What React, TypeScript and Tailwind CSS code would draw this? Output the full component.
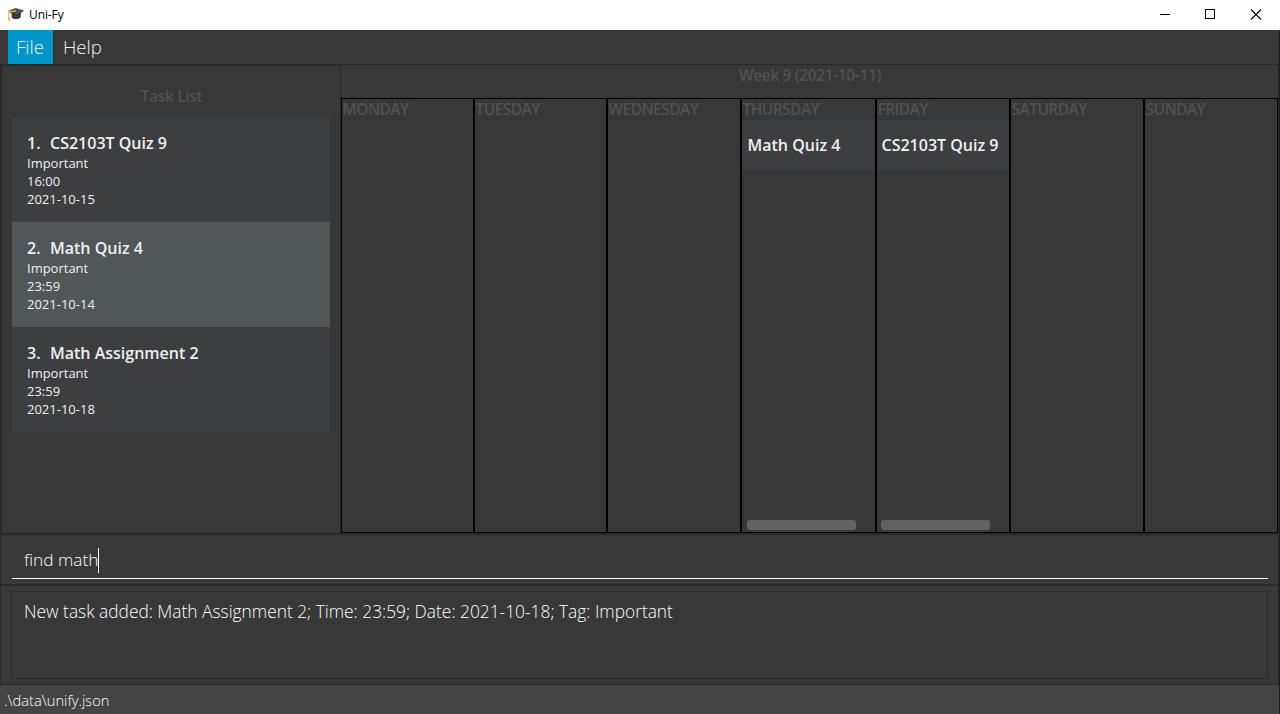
import React from "react";

type Task = { id: number; name: string; tag: string; time: string; date: string; shade: string };
type Day = { name: string; width: string; task?: string; taskPad?: string; barMargin?: string };

const tasks: Task[] = [
  { id: 1, name: "CS2103T Quiz 9", tag: "Important", time: "16:00", date: "2021-10-15", shade: "bg-[#3c3e3f]" },
  { id: 2, name: "Math Quiz 4", tag: "Important", time: "23:59", date: "2021-10-14", shade: "bg-[#515658]" },
  { id: 3, name: "Math Assignment 2", tag: "Important", time: "23:59", date: "2021-10-18", shade: "bg-[#3c3e3f]" },
];

const days: Day[] = [
  { name: "MONDAY", width: "w-[133px]" },
  { name: "TUESDAY", width: "w-[133px]" },
  { name: "WEDNESDAY", width: "w-[134px]" },
  { name: "THURSDAY", width: "w-[135px]", task: "Math Quiz 4", taskPad: "pl-[5.500px]", barMargin: "ml-[4.500px]" },
  { name: "FRIDAY", width: "w-[134px]", task: "CS2103T Quiz 9", taskPad: "pl-[4.500px]", barMargin: "ml-[3.500px]" },
  { name: "SATURDAY", width: "w-[134px]" },
  { name: "SUNDAY", width: "w-[134px]" },
];

function CapIcon() {
  return (
    <svg width="16" height="16" viewBox="0 0 16 16">
      <path d="M3.6 6v4.6c1.6 2.2 7.6 2.2 9.2-.6V5.600z" fill="#3a3c3d" />
      <path d="M.6 3.800 7.600.9l8 2.300-7 4.900z" fill="#505355" />
      <path d="m.6 3.800 8 4.100 7-4.700v.8L8.600 8.900.6 4.700z" fill="#222" />
      <path d="M8 3.900.9 4.800v8.700" fill="none" stroke="#e8b53a" strokeWidth="1.200" />
      <path d="M.2 10.500h1.600l.2 3.300H0z" fill="#f0bd3c" />
    </svg>
  );
}

function TitleBar() {
  return (
    <header className="flex h-[30px] shrink-0 items-center bg-white pl-2 text-black">
      <CapIcon />
      <span className="ml-[5px] text-[12px] leading-[16px] tracking-[-0.1px]">Uni-Fy</span>
      <svg className="ml-auto" width="138" height="30" viewBox="0 0 138 30" fill="none" stroke="#000" shapeRendering="crispEdges">
        <path d="M18 14.5h10" />
        <rect x="63.500" y="9.500" width="9" height="9" />
        <path d="m109 9.500 10 10m0-10-10 10" shapeRendering="auto" strokeWidth="1.100" />
      </svg>
    </header>
  );
}

function TaskCard({ task }: { task: Task }) {
  return (
    <li className={"h-[105px] pl-[15px] pt-[15px] text-[#f0f0f0] " + task.shade}>
      <div className="flex h-[22px] text-[16px] font-semibold leading-[22px]">
        <span className="w-[23px]">{task.id}.</span>
        <span>{task.name}</span>
      </div>
      <div className="text-[13px] leading-[18px]">
        <p>{task.tag}</p>
        <p>{task.time}</p>
        <p>{task.date}</p>
      </div>
    </li>
  );
}

function DayColumn({ day }: { day: Day }) {
  return (
    <section className={"flex shrink-0 flex-col border border-black " + day.width}>
      <h3 className="h-[21px] pl-[0.500px] text-[15.500px] font-semibold leading-[21px] tracking-[-0.550px] text-[#515151]">
        {day.name}
      </h3>
      {day.task && (
        <>
          <div className={"h-[50px] whitespace-nowrap bg-[#3c3e3f] text-[16px] font-semibold leading-[50px] text-[#f0f0f0] " + day.taskPad}>
            {day.task}
          </div>
          <div className={"mb-[2px] mt-auto h-[10px] w-[109.500px] rounded-[3px] bg-[#626262] " + day.barMargin} />
        </>
      )}
    </section>
  );
}

export default function App() {
  return (
    <div className="flex h-[714px] w-[1280px] flex-col overflow-hidden bg-[#383838] font-['Open_Sans',sans-serif]">
      <TitleBar />
      <div className="flex min-h-0 flex-1 flex-col border-r border-[#1c1c1c]">
        <nav className="flex h-[34px] shrink-0 pl-2 text-[18.600px] font-light leading-[34px] text-[#f2f2f2]">
          <span className="w-[45px] bg-[#0096c9] pl-[8px]">File</span>
          <span className="ml-[10px]">Help</span>
        </nav>

        <main className="flex h-[469px] shrink-0 border-t border-[#2a2a2a]">
          <aside className="w-[341px] shrink-0 border-x border-t border-[#2a2a2a] border-l-2 px-[10px] pt-[20px]">
            <h2 className="h-[31px] pl-[1px] text-center text-[15.500px] font-semibold leading-[21px] tracking-[-0.350px] text-[#515151]">
              Task List
            </h2>
            <ul>
              {tasks.map((t) => (
                <TaskCard key={t.id} task={t} />
              ))}
            </ul>
          </aside>
          <div className="flex flex-1 flex-col border-r border-[#2a2a2a]">
            <h2 className="h-[33px] pl-[1px] text-center text-[15.500px] font-semibold leading-[21px] tracking-[-0.370px] text-[#515151]">
              Week 9 (2021-10-11)
            </h2>
            <div className="flex flex-1">
              {days.map((d) => (
                <DayColumn key={d.name} day={d} />
              ))}
            </div>
          </div>
        </main>

        <div className="h-[53px] shrink-0 border border-y-2 border-[#2a2a2a] pl-[11px] pr-[10px]">
          <div className="flex h-[44px] items-center border-b border-white pl-3 pt-[7px] text-[17.300px] font-light text-white">
            <span>find math</span>
            <span className="h-[25px] w-px bg-white" />
          </div>
        </div>

        <div className="h-[99px] shrink-0 border-x border-b border-[#2a2a2a] px-[10px] pt-[5px]">
          <div className="h-[88px] border border-[#2a2a2a] pl-3 pt-[7px] text-[17.350px] font-light leading-[24px] text-white">
            New task added: Math Assignment 2; Time: 23:59; Date: 2021-10-18; Tag: Important
          </div>
        </div>

        <footer className="flex-1 bg-[#444] pl-1 text-[14.700px] font-light leading-[31px] text-white">.\data\unify.json</footer>
      </div>
    </div>
  );
}
